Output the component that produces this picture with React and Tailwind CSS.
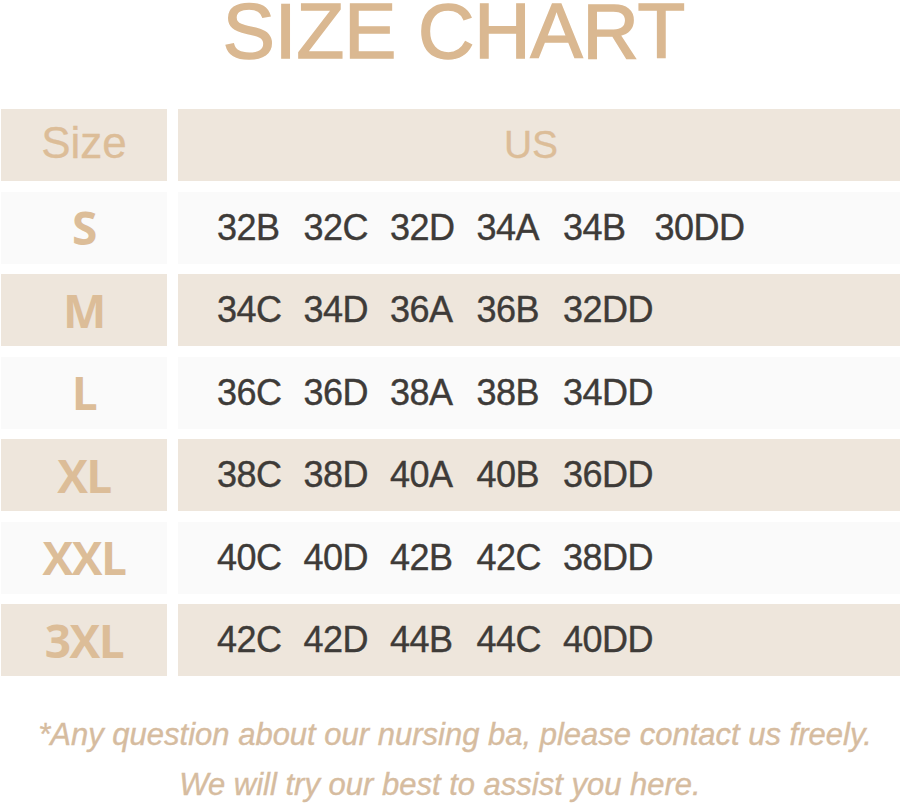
import React from 'react';

const rows = [
  { size: 'S', values: ['32B', '32C', '32D', '34A', '34B', '30DD'], tone: 'light' },
  { size: 'M', values: ['34C', '34D', '36A', '36B', '32DD'], tone: 'beige' },
  { size: 'L', values: ['36C', '36D', '38A', '38B', '34DD'], tone: 'light' },
  { size: 'XL', values: ['38C', '38D', '40A', '40B', '36DD'], tone: 'beige' },
  { size: 'XXL', values: ['40C', '40D', '42B', '42C', '38DD'], tone: 'light' },
  { size: '3XL', values: ['42C', '42D', '44B', '44C', '40DD'], tone: 'beige' },
];

const App = () => {
  return (
    <div className="w-[900px] h-[804px] bg-white overflow-hidden font-['Liberation_Sans',Arial,sans-serif]">
      <h1 className="mt-[1px] h-[60px] leading-[60px] text-[78px] text-center pl-[8px] text-[#dab891] font-normal [-webkit-text-stroke:1.6px_#dab891]">
        SIZE CHART
      </h1>

      <div className="mt-[48px] flex flex-col gap-[10.75px]">
        <div className="flex h-[72px] gap-[11px]">
          <div className="ml-px w-[166px] bg-[#eee6dc] flex items-center justify-center text-[44px] text-[#dcbd98] pb-[4px] [-webkit-text-stroke:0.3px_#dcbd98]">
            Size
          </div>
          <div className="flex-1 bg-[#eee6dc] flex items-center justify-center text-[39px] text-[#dcbd98] pr-[16px] [-webkit-text-stroke:0.3px_#dcbd98]">
            US
          </div>
        </div>

        {rows.map(row => (
          <div key={row.size} className="flex h-[71.75px] gap-[11px]">
            <div
              className={`ml-px w-[166px] flex items-center justify-center font-['Open_Sans',sans-serif] font-bold text-[46px] tracking-[-1.5px] text-[#dcbd98] ${row.tone === 'beige' ? 'bg-[#eee6dc]' : 'bg-[#fafafa]'}`}
            >
              {row.size}
            </div>
            <div
              className={`flex-1 flex items-center pl-[39px] text-[36px] tracking-[-0.5px] text-[#3e3b38] [-webkit-text-stroke:0.4px_#3e3b38] ${row.tone === 'beige' ? 'bg-[#eee6dc]' : 'bg-[#fafafa]'}`}
            >
              {row.values.map((v, idx) => (
                <span key={v} className={`w-[86.5px] shrink-0 ${idx === 5 ? 'ml-[5px]' : ''}`}>
                  {v}
                </span>
              ))}
            </div>
          </div>
        ))}
      </div>

      <div className="mt-[33.5px] italic text-[31px] leading-[50px] text-[#d6bc9f] text-center [-webkit-text-stroke:0.4px_#d6bc9f]">
        <p className="pl-[10px]">*Any question about our nursing ba, please contact us freely.</p>
        <p className="pr-[20px]">We will try our best to assist you here.</p>
      </div>
    </div>
  );
};

export default App;
